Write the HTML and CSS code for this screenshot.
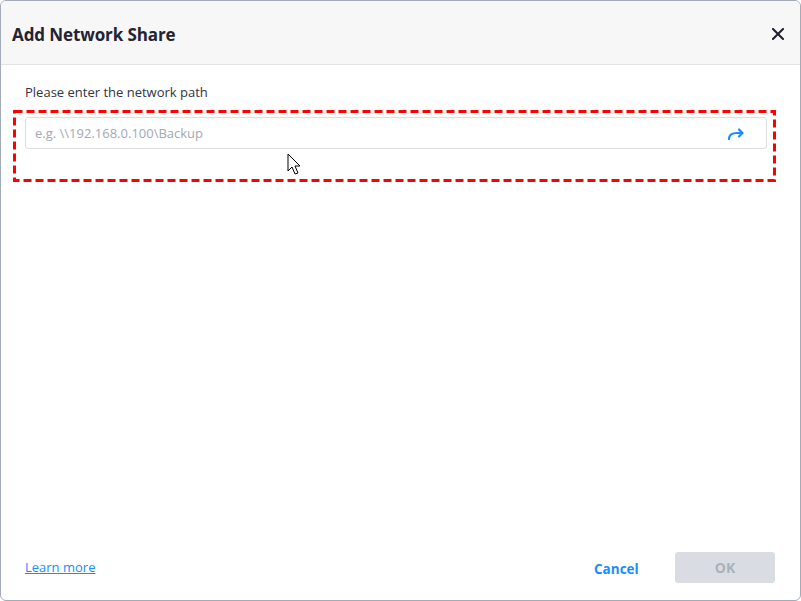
FILE: index.html
```html
<!DOCTYPE html>
<html>
<head>
<meta charset="utf-8">
<link rel="stylesheet" href="styles.css">
</head>
<body>
<div class="dialog">
  <div class="header">
    <div class="title">Add Network Share</div>
    <svg class="close" width="12" height="12" viewBox="0 0 12 12"><path d="M1 1L11 11M11 1L1 11" stroke="#1e1e2e" stroke-width="2" stroke-linecap="square"/></svg>
  </div>
  <div class="content">
    <div class="label">Please enter the network path</div>
    <div class="input">
      <span class="placeholder">e.g. \\192.168.0.100\Backup</span>
      <svg class="go" width="18" height="12" viewBox="0 0 18 12"><path d="M2 11C2 6 6 5 10 5H15" fill="none" stroke="#1a8cff" stroke-width="2.2" stroke-linecap="round"/><path d="M12 1.5L15.5 5L12 8.5" fill="none" stroke="#1a8cff" stroke-width="2.2" stroke-linecap="round" stroke-linejoin="round"/></svg>
    </div>
    <svg class="highlight" width="765" height="74" viewBox="0 0 765 74"><rect x="2.5" y="2.5" width="760" height="69" fill="none" stroke="#ff0000" stroke-width="3" stroke-dasharray="8 4"/></svg>
    <svg class="cursor" width="16" height="24" viewBox="0 0 16 24"><path d="M1 1V18L5 14L8 21L11 20L8 13H13Z" fill="#fff" stroke="#000" stroke-width="1"/></svg>
  </div>
  <div class="footer">
    <a class="learn">Learn more</a>
    <div class="actions">
      <span class="cancel">Cancel</span>
      <span class="ok">OK</span>
    </div>
  </div>
</div>
</body>
</html>
```
FILE: styles.css
```css
html, body { margin: 0; padding: 0; background: #fff; }
body { font-family: "Open Sans", "Noto Sans", sans-serif; width: 801px; height: 601px; overflow: hidden; }
.dialog {
  box-sizing: border-box;
  width: 801px; height: 601px;
  border: 1px solid #a3aab8;
  border-radius: 6px;
  display: flex; flex-direction: column;
  overflow: hidden;
  background: #fff;
  position: relative;
}
.header {
  height: 63px;
  background: #f7f7f7;
  border-bottom: 1px solid #e2e3e6;
  display: flex; align-items: center; justify-content: space-between;
  padding: 0 16px 0 11px;
  flex: none;
}
.title { font-size: 17px; font-weight: 700; color: #232333; letter-spacing: -0.1px; padding-top: 4px; }
.close { margin-top: 2px; }
.content { flex: 1; padding: 18px 33px 0 24px; position: relative; }
.label { font-size: 13px; color: #333344; line-height: 18px; }
.input {
  margin-top: 16px;
  height: 30px;
  border: 1px solid #dcdde2;
  border-radius: 3px;
  display: flex; align-items: center; justify-content: space-between;
  padding: 0 21px 0 9px;
}
.placeholder { font-size: 13px; color: #a3a9b3; }
.go { margin-top: 1px; }
.highlight { position: absolute; left: 11px; top: 44px; }
.cursor { position: absolute; left: 286px; top: 88px; }
.footer {
  height: 48px;
  flex: none;
  display: flex; align-items: flex-start; justify-content: space-between;
  padding: 0 25px 0 24px;
}
.learn { font-size: 13px; color: #1a8cff; text-decoration: underline; margin-top: 6px; }
.actions { display: flex; align-items: center; }
.cancel { font-size: 13.5px; font-weight: 700; color: #1a8cff; width: 81px; margin-top: 3px; }
.ok {
  width: 100px; height: 31px;
  background: #d9dce3;
  border-radius: 3px;
  color: #aab0bb;
  font-weight: 700; font-size: 14px;
  display: flex; align-items: center; justify-content: center;
}
```
